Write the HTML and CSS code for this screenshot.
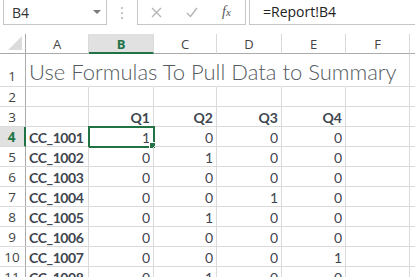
FILE: index.html
```html
<!DOCTYPE html>
<html>
<head>
<meta charset="utf-8">
<link rel="stylesheet" href="styles.css">
</head>
<body>
<div class="app">
  <div class="toolbar">
    <div class="namebox">
      <span class="name">B4</span>
      <svg class="caret" width="8" height="5" viewBox="0 0 8 5"><path d="M0 0H8L4 4Z" fill="#7a7a7a"/></svg>
    </div>
    <div class="grip"><span></span><span></span><span></span></div>
    <div class="icons">
      <svg class="ico" width="11" height="11" viewBox="0 0 11 11"><path d="M1 1L10 10M10 1L1 10" stroke="#b4b4b4" stroke-width="1.3" fill="none"/></svg>
      <svg class="ico" width="12" height="11" viewBox="0 0 12 11"><path d="M1 6L4.5 9.5L11 1" stroke="#b4b4b4" stroke-width="1.4" fill="none"/></svg>
      <span class="fx">f<i>x</i></span>
    </div>
    <div class="formula">=Report!B4</div>
  </div>

  <div class="grid">
    <div class="corner"><svg width="14" height="14" viewBox="0 0 14 14"><path d="M14 0V14H0Z" fill="#dcdcdc"/></svg></div>
    <div class="ch">A</div>
    <div class="ch sel">B</div>
    <div class="ch">C</div>
    <div class="ch">D</div>
    <div class="ch">E</div>
    <div class="ch">F</div>
    <div class="ch"></div>

    <div class="rh tall">1</div>
    <div class="c tall title-row"><span class="title">Use Formulas To Pull Data to Summary</span></div>
    <div class="c tall nb"></div><div class="c tall nb"></div><div class="c tall nb"></div><div class="c tall nb"></div><div class="c tall"></div><div class="c tall"></div>

    <div class="rh">2</div>
    <div class="c"></div><div class="c"></div><div class="c"></div><div class="c"></div><div class="c"></div><div class="c"></div><div class="c"></div>

    <div class="rh">3</div>
    <div class="c"></div><div class="c n b">Q1</div><div class="c n b">Q2</div><div class="c n b">Q3</div><div class="c n b">Q4</div><div class="c"></div><div class="c"></div>

    <div class="rh sel">4</div>
    <div class="c b">CC_1001</div><div class="c n active">1<span class="handle"></span></div><div class="c n">0</div><div class="c n">0</div><div class="c n">0</div><div class="c"></div><div class="c"></div>

    <div class="rh">5</div>
    <div class="c b">CC_1002</div><div class="c n">0</div><div class="c n">1</div><div class="c n">0</div><div class="c n">0</div><div class="c"></div><div class="c"></div>

    <div class="rh">6</div>
    <div class="c b">CC_1003</div><div class="c n">0</div><div class="c n">0</div><div class="c n">0</div><div class="c n">0</div><div class="c"></div><div class="c"></div>

    <div class="rh">7</div>
    <div class="c b">CC_1004</div><div class="c n">0</div><div class="c n">0</div><div class="c n">1</div><div class="c n">0</div><div class="c"></div><div class="c"></div>

    <div class="rh">8</div>
    <div class="c b">CC_1005</div><div class="c n">0</div><div class="c n">1</div><div class="c n">0</div><div class="c n">0</div><div class="c"></div><div class="c"></div>

    <div class="rh">9</div>
    <div class="c b">CC_1006</div><div class="c n">0</div><div class="c n">0</div><div class="c n">0</div><div class="c n">0</div><div class="c"></div><div class="c"></div>

    <div class="rh">10</div>
    <div class="c b">CC_1007</div><div class="c n">0</div><div class="c n">0</div><div class="c n">0</div><div class="c n">1</div><div class="c"></div><div class="c"></div>

    <div class="rh">11</div>
    <div class="c b">CC_1008</div><div class="c n">0</div><div class="c n">1</div><div class="c n">0</div><div class="c n">0</div><div class="c"></div><div class="c"></div>
  </div>
</div>
</body>
</html>
```

FILE: styles.css
```css
* { box-sizing: border-box; }
html, body { margin: 0; padding: 0; background: #fff; overflow: hidden; }
body { width: 415px; height: 277px; font-family: "Lato", "Liberation Sans", sans-serif; color: #3f4650; }

.app { width: 415px; height: 277px; overflow: hidden; }

.toolbar { height: 34px; display: flex; align-items: flex-start; }
.namebox {
  margin-left: 3px; width: 104px; height: 25px;
  border: 1px solid #c6c6c6; border-top: none;
  display: flex; align-items: center; justify-content: space-between;
  padding: 0 5px 0 8px;
}
.name { font-family: "Open Sans", "Liberation Sans", sans-serif; font-size: 14px; color: #333; }
.grip { width: 30px; height: 25px; display: flex; flex-direction: column; align-items: center; justify-content: center; gap: 3px; }
.grip span { width: 2px; height: 2px; background: #c4c4c4; }
.icons {
  width: 109px; height: 25px; border: 1px solid #c6c6c6; border-top: none;
  display: flex; align-items: center; padding-left: 13px;
}
.icons .ico:nth-child(1) { margin-right: 24px; }
.icons .ico:nth-child(2) { margin-right: 24px; }
.fx { font-family: "Liberation Serif", serif; font-style: italic; font-size: 14px; color: #555; }
.fx i { font-size: 11px; }
.formula {
  margin-left: 3px; flex: 1; height: 25px; border: 1px solid #c6c6c6; border-top: none; border-right: none;
  font-family: "Open Sans", "Liberation Sans", sans-serif; font-size: 14px; color: #222;
  padding-left: 13px; line-height: 23px;
}

.grid {
  display: grid;
  grid-template-columns: 26px 63px 65px 63px 65px 64px 64px 20px;
  grid-template-rows: 20px 33px repeat(10, 20px);
}
.corner { border-right: 1px solid #ababab; border-bottom: 1px solid #ababab; display: flex; align-items: flex-end; justify-content: flex-end; padding: 0 3px 3px 0; }
.ch {
  border-right: 1px solid #dadada; border-bottom: 1px solid #ababab;
  font-family: "Open Sans", "Liberation Sans", sans-serif; font-size: 13px; color: #444;
  display: flex; align-items: center; justify-content: center; padding-top: 1px;
}
.ch.sel { background: #e1e1e1; color: #217346; font-weight: bold; border-bottom: 2px solid #217346; }
.rh {
  border-right: 1px solid #ababab; border-bottom: 1px solid #dadada;
  font-family: "Open Sans", "Liberation Sans", sans-serif; font-size: 13.5px; color: #444;
  display: flex; align-items: center; justify-content: center; padding-right: 1px;
}
.rh.tall { align-items: flex-end; padding-bottom: 1px; }
.rh.sel { background: #e1e1e1; color: #217346; font-weight: bold; border-right: 2px solid #217346; }
.c {
  border-right: 1px solid #dadada; border-bottom: 1px solid #dadada;
  font-size: 14px; line-height: 19px; padding: 1px 3px 0 3px; white-space: nowrap;
  position: relative;
}
.c.nb { border-right-color: transparent; }
.c.n { text-align: right; }
.c.b { font-weight: bold; }
.rh + .c.b { letter-spacing: -0.4px; }
.title-row { overflow: visible; z-index: 1; border-right-color: transparent; padding-top: 5px; }
.title { font-family: "Lato", sans-serif; font-weight: 300; font-size: 22px; color: #555b60; line-height: 26px; }
.c.active { outline: 2px solid #217346; outline-offset: -1px; }
.handle { position: absolute; right: -3px; bottom: -3px; width: 5px; height: 5px; background: #217346; border: 1px solid #fff; box-sizing: content-box; }
```
